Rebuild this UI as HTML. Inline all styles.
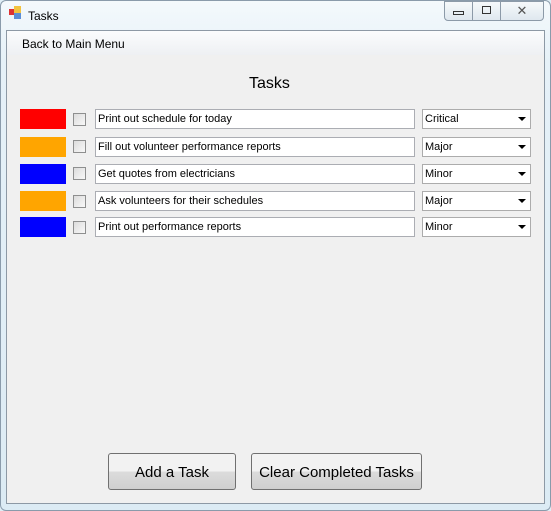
<!DOCTYPE html>
<html><head><style>
body{margin:0;width:551px;height:511px;background:#dfeef6;font-family:"Liberation Sans",sans-serif;position:relative;overflow:hidden}
.frame{position:absolute;left:0;top:0;width:549px;height:509px;border:1px solid #8a9bab;border-radius:6px;background:linear-gradient(#f4f9fc,#e6f1f8 60px,#dcebf4)}
.client{position:absolute;left:6px;top:30px;width:537px;height:472px;border:1px solid #8d99a5;background:#f0f0f0}
.menu{position:absolute;left:0;top:0;width:537px;height:24px;background:linear-gradient(#fbfcfd,#eef0f3);font-size:12px}
.menu span{position:absolute;left:15px;top:6px}
.abs{position:absolute}
.title{left:249px;top:75px;font-size:16px}
.sw{position:absolute;width:46px;height:20px}
.cb{position:absolute;width:11px;height:11px;border:1px solid #8e8f8f;background:linear-gradient(135deg,#dcdcdc,#f8f8f8)}
.tb{position:absolute;width:316px;height:18px;border:1px solid #abadb3;background:#fff;font-size:11px;line-height:19px;padding-left:2px}
.cmb{position:absolute;width:105px;height:18px;border:1px solid #acacac;background:#fff;font-size:11px;line-height:19px;padding-left:2px}
.cmb:after{content:"";position:absolute;right:4px;top:7px;border-left:4px solid transparent;border-right:4px solid transparent;border-top:4px solid #000}
.btn{position:absolute;height:35px;border:1px solid #707070;border-radius:3px;background:linear-gradient(#f2f2f2 50%,#dcdcdc 50%,#cfcfcf);font-size:15px;text-align:center;line-height:37px}
.wb{position:absolute;top:1px;height:18px;border:1px solid #8c9aa8;background:linear-gradient(#f6f9fb,#dfe8ef)}
</style></head><body>
<div class="frame"></div>
<div class="abs" style="left:9px;top:9px;width:6px;height:6px;background:#d33"></div>
<div class="abs" style="left:14px;top:6px;width:7px;height:7px;background:#f2c340"></div>
<div class="abs" style="left:14px;top:13px;width:7px;height:6px;background:#5b8ed6"></div>
<div class="abs" style="left:28px;top:9px;font-size:12px">Tasks</div>
<div class="wb" style="left:444px;width:27px;border-radius:0 0 0 4px"><div class="abs" style="left:8px;top:9px;width:9px;height:2px;border:1px solid #333"></div></div>
<div class="wb" style="left:472px;width:27px"><div class="abs" style="left:9px;top:4px;width:7px;height:6px;border:1px solid #333"></div></div>
<div class="wb" style="left:500px;width:42px;border-radius:0 0 4px 0;text-align:center;font-size:13px;color:#555;line-height:18px">✕</div>
<div class="client"><div class="menu"><span>Back to Main Menu</span></div></div>
<div class="abs title">Tasks</div>

<div class="sw" style="left:20px;top:109px;background:#f00"></div>
<div class="cb" style="left:73px;top:113px"></div>
<div class="tb" style="left:95px;top:109px">Print out schedule for today</div>
<div class="cmb" style="left:422px;top:109px">Critical</div>

<div class="sw" style="left:20px;top:137px;background:#ffa500"></div>
<div class="cb" style="left:73px;top:140px"></div>
<div class="tb" style="left:95px;top:137px">Fill out volunteer performance reports</div>
<div class="cmb" style="left:422px;top:137px">Major</div>

<div class="sw" style="left:20px;top:164px;background:#00f"></div>
<div class="cb" style="left:73px;top:167px"></div>
<div class="tb" style="left:95px;top:164px">Get quotes from electricians</div>
<div class="cmb" style="left:422px;top:164px">Minor</div>

<div class="sw" style="left:20px;top:191px;background:#ffa500"></div>
<div class="cb" style="left:73px;top:195px"></div>
<div class="tb" style="left:95px;top:191px">Ask volunteers for their schedules</div>
<div class="cmb" style="left:422px;top:191px">Major</div>

<div class="sw" style="left:20px;top:217px;background:#00f"></div>
<div class="cb" style="left:73px;top:221px"></div>
<div class="tb" style="left:95px;top:217px">Print out performance reports</div>
<div class="cmb" style="left:422px;top:217px">Minor</div>

<div class="btn" style="left:108px;top:453px;width:126px">Add a Task</div>
<div class="btn" style="left:251px;top:453px;width:169px">Clear Completed Tasks</div>
</body></html>
